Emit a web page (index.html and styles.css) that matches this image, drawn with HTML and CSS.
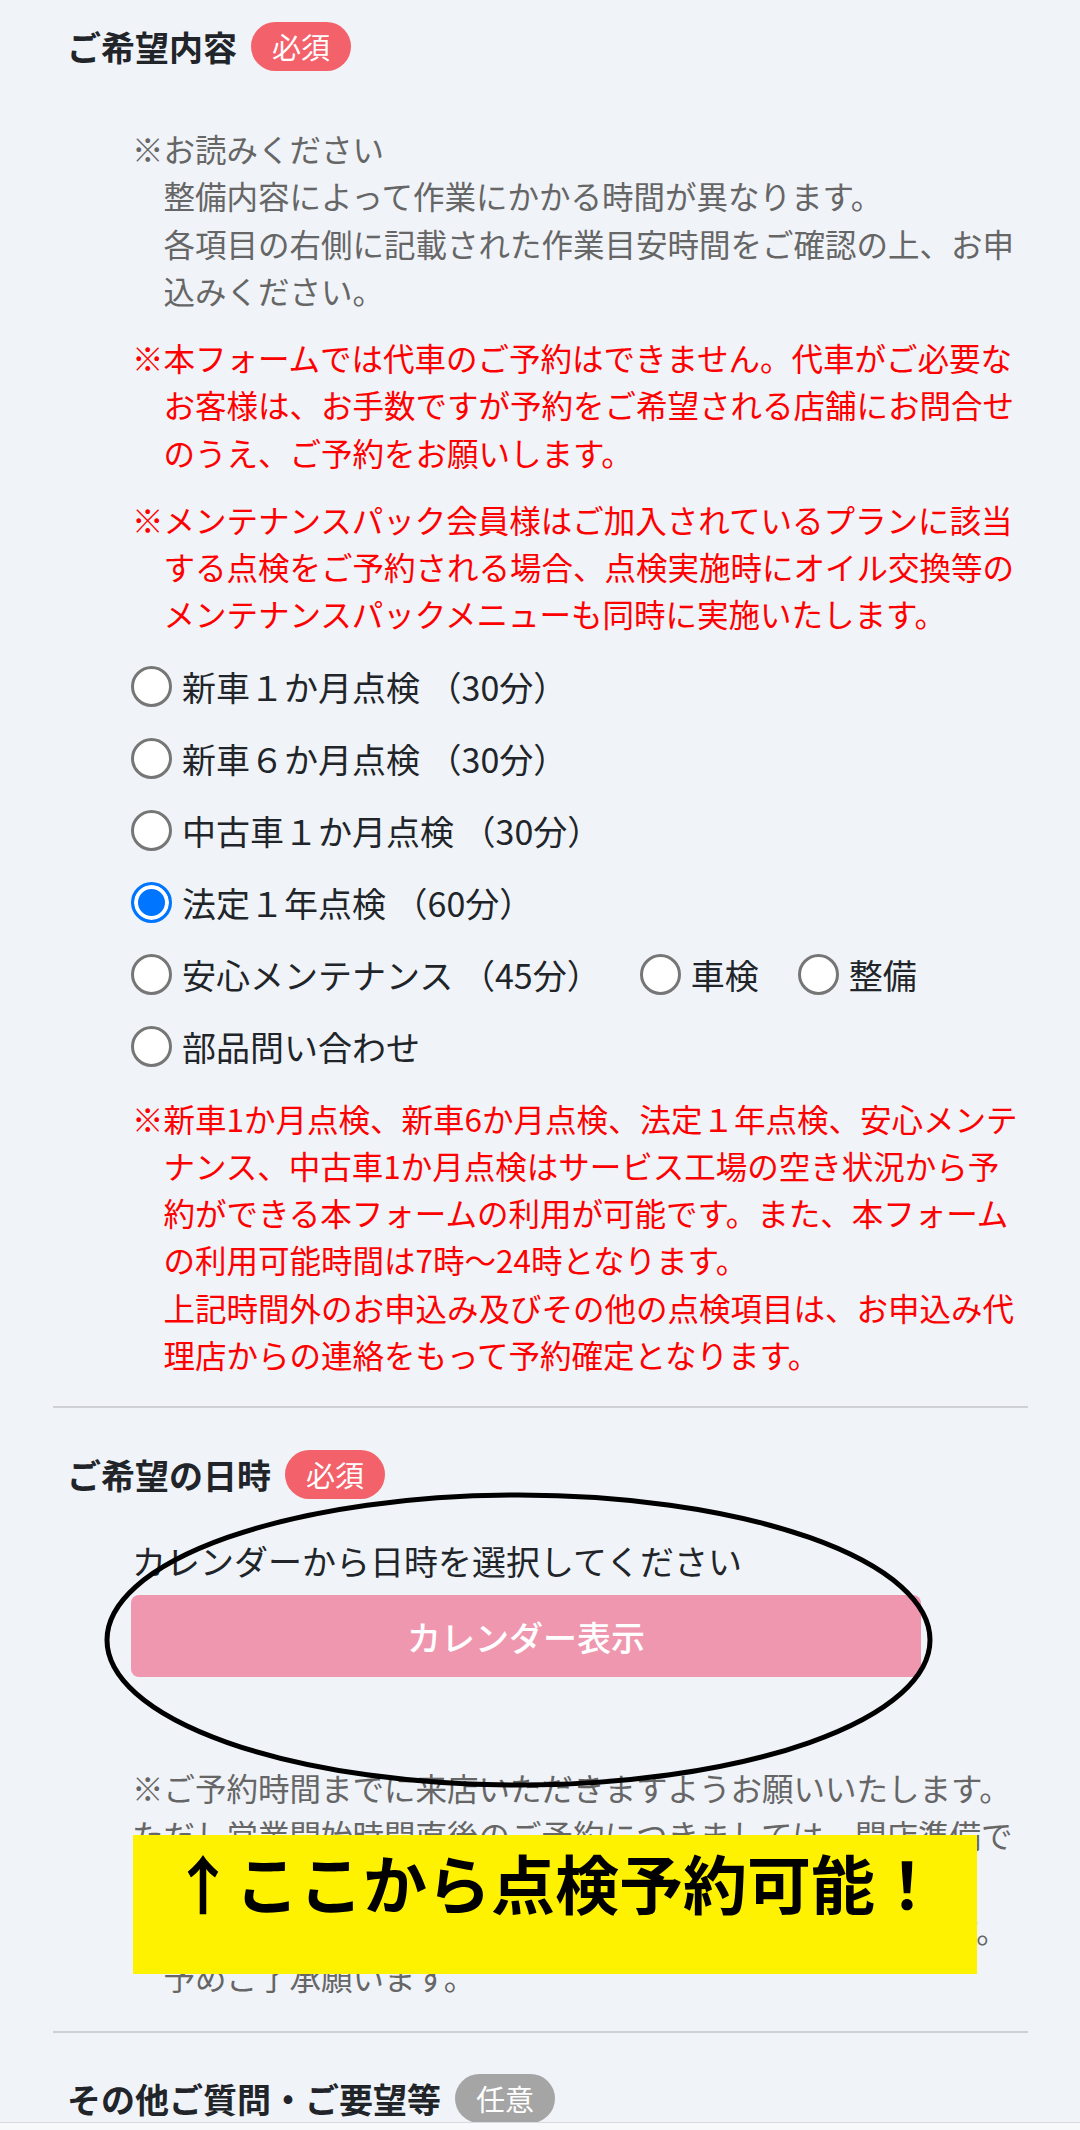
FILE: index.html
```html
<!DOCTYPE html>
<html lang="ja">
<head>
<meta charset="utf-8">
<title>ご希望内容</title>
<link rel="stylesheet" href="styles.css">
</head>
<body>
<div class="page">
  <section class="section section-first">
    <div class="head">
      <h2 class="title">ご希望内容</h2>
      <span class="badge badge-required">必須</span>
    </div>
    <div class="body">
      <p class="note note-gray note-read">※お読みください<br>整備内容によって作業にかかる時間が異なります。<br>各項目の右側に記載された作業目安時間をご確認の上、お申込みください。</p>
      <p class="note note-red note-gap">※本フォームでは代車のご予約はできません。代車がご必要なお客様は、お手数ですが予約をご希望される店舗にお問合せのうえ、ご予約をお願いします。</p>
      <p class="note note-red note-gap">※メンテナンスパック会員様はご加入されているプランに該当する点検をご予約される場合、点検実施時にオイル交換等のメンテナンスパックメニューも同時に実施いたします。</p>
      <div class="radios">
        <div class="radio-row">
          <label class="radio-item"><input type="radio" name="menu"><span>新車１か月点検 （30分）</span></label>
        </div>
        <div class="radio-row">
          <label class="radio-item"><input type="radio" name="menu"><span>新車６か月点検 （30分）</span></label>
        </div>
        <div class="radio-row">
          <label class="radio-item"><input type="radio" name="menu"><span>中古車１か月点検 （30分）</span></label>
        </div>
        <div class="radio-row">
          <label class="radio-item"><input type="radio" name="menu" checked><span>法定１年点検 （60分）</span></label>
        </div>
        <div class="radio-row">
          <label class="radio-item"><input type="radio" name="menu"><span>安心メンテナンス （45分）</span></label>
          <label class="radio-item"><input type="radio" name="menu"><span>車検</span></label>
          <label class="radio-item"><input type="radio" name="menu"><span>整備</span></label>
        </div>
        <div class="radio-row">
          <label class="radio-item"><input type="radio" name="menu"><span>部品問い合わせ</span></label>
        </div>
      </div>
      <p class="note note-red note-after-radios">※新車1か月点検、新車6か月点検、法定１年点検、安心メンテナンス、中古車1か月点検はサービス工場の空き状況から予約ができる本フォームの利用が可能です。また、本フォームの利用可能時間は7時～24時となります。<br>上記時間外のお申込み及びその他の点検項目は、お申込み代理店からの連絡をもって予約確定となります。</p>
    </div>
  </section>

  <section class="section section-second">
    <div class="head">
      <h2 class="title">ご希望の日時</h2>
      <span class="badge badge-required">必須</span>
    </div>
    <div class="body">
      <p class="lead">カレンダーから日時を選択してください</p>
      <button class="cal-btn" type="button">カレンダー表示</button>
      <p class="note note-gray note-visit">※ご予約時間までに来店いただきますようお願いいたします。</p>
      <p class="note note-gray note-plain">ただし営業開始時間直後のご予約につきましては、開店準備でお時間をいただく場合がございます。</p>
      <p class="note note-gray">※ご来店の状況によっては、お待たせする場合がございます。予めご了承願います。</p>
    </div>
  </section>

  <section class="section section-third">
    <div class="head">
      <h2 class="title">その他ご質問・ご要望等</h2>
      <span class="badge badge-optional">任意</span>
    </div>
  </section>

  <svg class="circle-mark" width="840" height="310" viewBox="0 0 840 310" aria-hidden="true">
    <ellipse cx="418.5" cy="152" rx="411.5" ry="145" fill="none" stroke="#000" stroke-width="5"/>
  </svg>
  <div class="callout">↑ここから点検予約可能！</div>
</div>
<div class="bottom-bar"></div>
</body>
</html>
```
FILE: styles.css
```css
* { box-sizing: border-box; }

body {
  margin: 0;
  background: #f0f3f8;
  font-family: "Noto Sans CJK JP", "Noto Sans", sans-serif;
  color: #212529;
}

.page {
  position: relative;
  padding: 0 52px 0 53px;
}

.section {
  border-bottom: 2px solid #cfd0d4;
}
.section-first { padding: 22px 0 28px; }
.section-second { padding: 42px 0 31px; }
.section-third { padding: 41px 0 0; border-bottom: none; }

.head {
  display: flex;
  align-items: center;
  gap: 14px;
  padding-left: 14px;
  height: 49px;
}

.title {
  margin: 0;
  font-size: 34px;
  font-weight: 700;
  line-height: 49px;
  color: #212529;
}

.badge {
  display: inline-block;
  height: 49px;
  padding: 0 21px;
  border-radius: 25px;
  font-size: 29px;
  line-height: 49px;
  color: #fff;
}
.badge-required { background: #f3616a; }
.badge-optional { background: #a5a5a5; }

.body {
  padding: 0 6px 0 79px;
}

.note {
  margin: 0;
  font-size: 31.5px;
  line-height: 47.25px;
  padding-left: 31.5px;
  text-indent: -31.5px;
}
.note-gray { color: #666; }
.note-red { color: #ff0000; }
.note-plain { padding-left: 0; text-indent: 0; }

.note-read { margin-top: 54px; }
.note-gap { margin-top: 20px; }
.note-after-radios { margin-top: 12.5px; }

.radios {
  margin-top: 12.5px;
}
.radio-row {
  display: flex;
  align-items: center;
  gap: 40px;
  height: 72px;
}
.radio-item {
  display: flex;
  align-items: center;
  gap: 10px;
  font-size: 34px;
  line-height: 51px;
  color: #212529;
}
.radio-item input {
  appearance: none;
  -webkit-appearance: none;
  margin: 0 0 0 -1px;
  width: 41px;
  height: 41px;
  border: 3px solid #767676;
  border-radius: 50%;
  background: #fff;
  flex: none;
}
.radio-item input:checked {
  border-color: #0075ff;
  background: #0075ff;
  box-shadow: inset 0 0 0 4px #fff;
}

.lead {
  margin: 36px 0 0;
  font-size: 34px;
  line-height: 51px;
  color: #212529;
}

.cal-btn {
  display: block;
  margin-top: 9px;
  margin-left: -1px;
  width: 790px;
  height: 82px;
  border: none;
  border-radius: 8px;
  background: #f097b0;
  color: #fff;
  font-family: inherit;
  font-size: 34px;
  font-weight: 500;
}

.note-visit { margin-top: 87px; }

.circle-mark {
  position: absolute;
  left: 100px;
  top: 1488px;
}

.callout {
  position: absolute;
  left: 133px;
  top: 1835px;
  width: 844px;
  height: 139px;
  padding-top: 14px;
  background: #fff200;
  color: #000;
  font-size: 64px;
  font-weight: 700;
  line-height: 64px;
  text-align: center;
}

.bottom-bar {
  position: fixed;
  left: 0;
  right: 0;
  bottom: 0;
  height: 8px;
  background: #f8f9fb;
  border-top: 1px solid #d9dadd;
}
```
